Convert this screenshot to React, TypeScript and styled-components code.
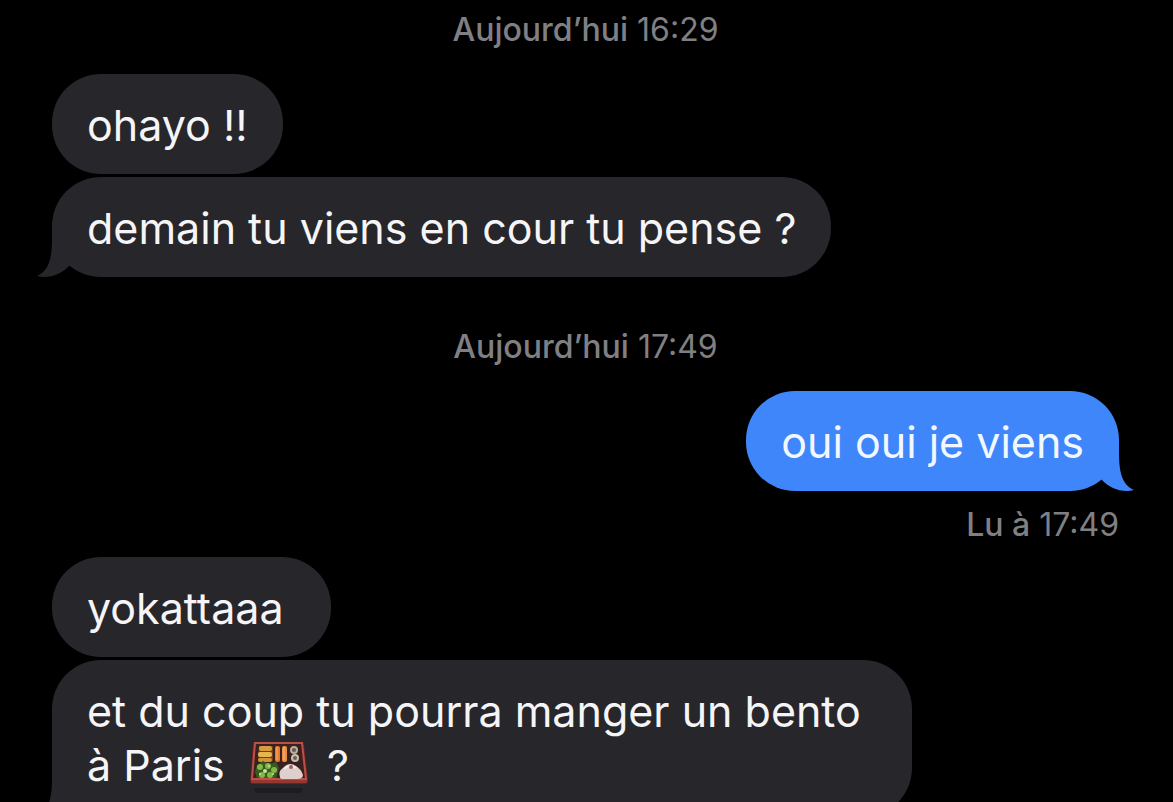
import React from "react";
import styled, { createGlobalStyle } from "styled-components";

type Side = "received" | "sent";

const GlobalStyle = createGlobalStyle`
  * { box-sizing: border-box; }
  body {
    margin: 0;
    background: #000;
    font-family: Inter, "Liberation Sans", sans-serif;
  }
`;

const Conversation = styled.main`
  display: flex;
  flex-direction: column;
  height: 100vh;
  overflow: hidden;
  padding: 12px 54px 0 52px;
`;

const Timestamp = styled.p`
  flex: none;
  margin: 0;
  color: #808084;
  font-size: 32px;
  line-height: 36px;
  text-align: center;
`;

const Label = styled.span`
  font-weight: 500;
`;

const Group = styled.section<{ $side: Side; $gap: number }>`
  flex: none;
  display: flex;
  flex-direction: column;
  align-items: ${(p) => (p.$side === "sent" ? "flex-end" : "flex-start")};
  gap: 3px;
  margin-top: ${(p) => p.$gap}px;
`;

const Spacer = styled.div`
  flex: none;
  height: 52px;
`;

const Bubble = styled.div<{ $side: Side }>`
  position: relative;
  max-width: 860px;
  padding: 24px 35px 22px;
  border-radius: 49px;
  background: ${(p) => (p.$side === "sent" ? "#3f86fb" : "#27262b")};
  color: ${(p) => (p.$side === "sent" ? "#f1f8ff" : "#f5f5f7")};
  font-size: 43px;
  line-height: 54px;
`;

const TailShape = styled.svg<{ $side: Side }>`
  position: absolute;
  bottom: 0;
  ${(p) => (p.$side === "sent" ? "right: -15px; transform: scaleX(-1);" : "left: -15px;")}
  fill: ${(p) => (p.$side === "sent" ? "#3f86fb" : "#27262b")};
`;

const Receipt = styled.p`
  margin: 13px 0 0;
  color: #808084;
  font-size: 32px;
  line-height: 36px;
`;

const Unbroken = styled.span`
  display: inline-block;
  white-space: nowrap;
`;

const BentoIcon = styled.svg`
  margin: 0 18px 0 12px;
  vertical-align: -14px;
`;

function Tail({ side }: { side: Side }) {
  return (
    <TailShape $side={side} width="50" height="52" viewBox="0 0 50 52" aria-hidden="true">
      <path d="M15 0V14C15 33 12 46 0 51C11 54 24 50 33 40L50 20V0Z" />
    </TailShape>
  );
}

function Message({ side, tail, children }: { side: Side; tail?: boolean; children: React.ReactNode }) {
  return (
    <Bubble $side={side}>
      {tail && <Tail side={side} />}
      {children}
    </Bubble>
  );
}

function Bento() {
  return (
    <BentoIcon width="60" height="54" viewBox="0 0 60 54" role="img" aria-label="bento">
      <path d="M5 47H54L52 52H7Z" fill="#1f1c20" />
      <path d="M6 1H53Q55 1 55 3L59 39Q59 43 56 43H4Q1 43 1 39L4 3Q4 1 6 1Z" fill="#6d2020" />
      <path d="M6 2H53L57 38H3Z" fill="#3a2020" stroke="#ba5147" strokeWidth="2" />
      <path d="M2 39H58V42H2Z" fill="#97362f" />
      <path d="M10 5H24V20H9Z" fill="#724017" />
      <rect x="10" y="5" width="13" height="5" rx="2" fill="#d99b3c" />
      <rect x="9" y="11" width="14" height="5" rx="2" fill="#e5b650" />
      <rect x="9" y="17" width="14" height="4" rx="2" fill="#d49336" />
      <rect x="26" y="5" width="5" height="16" rx="2" fill="#e37a2d" />
      <rect x="33" y="5" width="5" height="16" rx="2" fill="#ea9040" />
      <path d="M28 6V19M35 6V19" stroke="#f4b476" />
      <circle cx="45" cy="9" r="4" fill="#b8b09c" />
      <circle cx="46" cy="17" r="4" fill="#c7bfae" />
      <circle cx="45" cy="9" r="2" fill="#66594e" />
      <circle cx="46" cy="17" r="2" fill="#70604c" />
      <path d="M8 24L14 20L20 23L27 21L30 27L27 37H8L6 31Z" fill="#375c20" />
      <g fill="#83b747">
        <circle cx="11" cy="26" r="3" />
        <circle cx="19" cy="25" r="3" />
        <circle cx="25" cy="29" r="3" />
        <circle cx="13" cy="34" r="3" />
        <circle cx="21" cy="34" r="3" />
      </g>
      <g fill="#d0e29a">
        <circle cx="16" cy="30" r="2" />
        <circle cx="11" cy="33" r="1" />
        <circle cx="24" cy="33" r="1" />
        <circle cx="20" cy="25" r="1" />
      </g>
      <path d="M31 36Q29 30 34 27Q40 20 47 25Q52 28 54 34Q54 38 48 38H34Q31 38 31 36Z" fill="#ddd0cd" />
      <path d="M35 28Q41 22 47 27" stroke="#f4eae6" strokeWidth="2" fill="none" />
      <circle cx="42" cy="26" r="2" fill="#a16168" />
    </BentoIcon>
  );
}

export default function App() {
  return (
    <>
      <GlobalStyle />
      <Conversation>
        <Timestamp>
          <Label>Aujourd’hui</Label> 16:29
        </Timestamp>
        <Group $side="received" $gap={26}>
          <Message side="received">ohayo !!</Message>
          <Message side="received" tail>
            demain tu viens en cour tu pense ?
          </Message>
        </Group>
        <Spacer />
        <Timestamp>
          <Label>Aujourd’hui</Label> 17:49
        </Timestamp>
        <Group $side="sent" $gap={26}>
          <Message side="sent" tail>
            oui oui je viens
          </Message>
          <Receipt>
            <Label>Lu à</Label> 17:49
          </Receipt>
        </Group>
        <Group $side="received" $gap={14}>
          <Message side="received">yokattaaa{"\u00a0"}</Message>
          <Message side="received" tail>
            et du coup tu pourra manger un bento{" "}
            <Unbroken>
              à Paris <Bento />?
            </Unbroken>
          </Message>
        </Group>
      </Conversation>
    </>
  );
}
